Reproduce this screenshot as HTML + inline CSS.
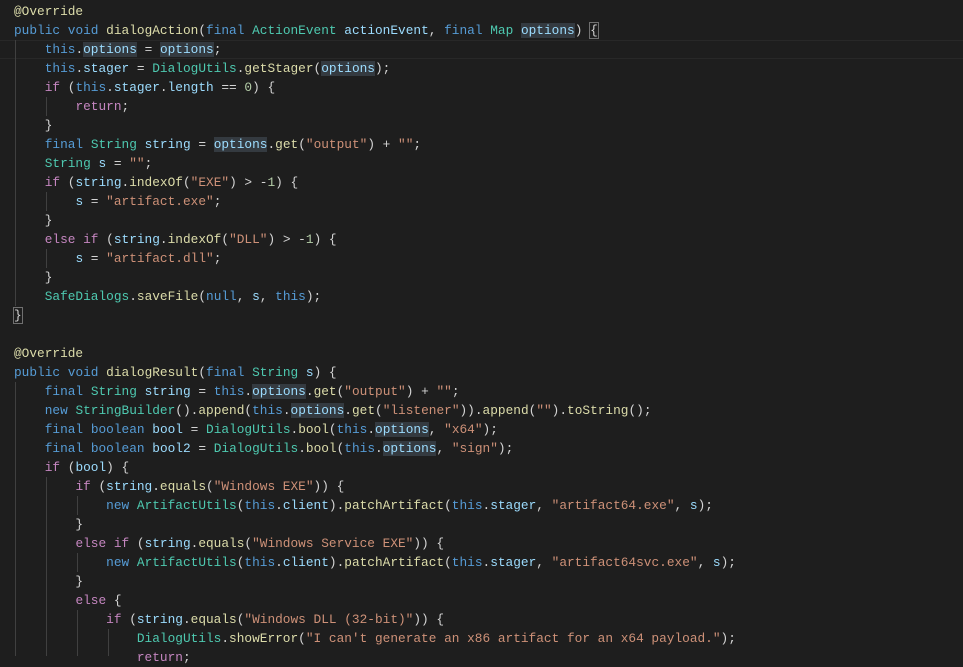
<!DOCTYPE html><html><head><style>
body{margin:0;background:#1e1e1e;width:963px;height:656px;overflow:hidden;position:relative}
pre{margin:0;position:absolute;left:14px;top:2px;font-family:"Liberation Mono",monospace;font-size:12.8px;line-height:19px;color:#d4d4d4}
.k{color:#569cd6}.c{color:#c586c0}.t{color:#4ec9b0}.f{color:#dcdcaa}.v{color:#9cdcfe}.s{color:#ce9178}.n{color:#b5cea8}
.h{background:#343a40}.b{outline:1px solid #707070}
.g{position:absolute;width:1px;background:#404040}
.cl{position:absolute;left:0;width:963px;top:40px;height:17px;border-top:1px solid #282828;border-bottom:1px solid #282828}
</style></head><body>
<div class="cl"></div>
<div class="g" style="left:15px;top:40px;height:266px"></div>
<div class="g" style="left:46px;top:97px;height:19px"></div>
<div class="g" style="left:46px;top:192px;height:19px"></div>
<div class="g" style="left:46px;top:249px;height:19px"></div>
<div class="g" style="left:15px;top:382px;height:274px"></div>
<div class="g" style="left:46px;top:477px;height:179px"></div>
<div class="g" style="left:77px;top:496px;height:19px"></div>
<div class="g" style="left:77px;top:553px;height:19px"></div>
<div class="g" style="left:77px;top:610px;height:46px"></div>
<div class="g" style="left:108px;top:629px;height:27px"></div>
<pre><span class="f">@Override</span>
<span class="k">public</span> <span class="k">void</span> <span class="f">dialogAction</span>(<span class="k">final</span> <span class="t">ActionEvent</span> <span class="v">actionEvent</span>, <span class="k">final</span> <span class="t">Map</span> <span class="v h">options</span>) <span class="b">{</span>
    <span class="k">this</span>.<span class="v h">options</span> = <span class="v h">options</span>;
    <span class="k">this</span>.<span class="v">stager</span> = <span class="t">DialogUtils</span>.<span class="f">getStager</span>(<span class="v h">options</span>);
    <span class="c">if</span> (<span class="k">this</span>.<span class="v">stager</span>.<span class="v">length</span> == <span class="n">0</span>) {
        <span class="c">return</span>;
    }
    <span class="k">final</span> <span class="t">String</span> <span class="v">string</span> = <span class="v h">options</span>.<span class="f">get</span>(<span class="s">"output"</span>) + <span class="s">""</span>;
    <span class="t">String</span> <span class="v">s</span> = <span class="s">""</span>;
    <span class="c">if</span> (<span class="v">string</span>.<span class="f">indexOf</span>(<span class="s">"EXE"</span>) &gt; -<span class="n">1</span>) {
        <span class="v">s</span> = <span class="s">"artifact.exe"</span>;
    }
    <span class="c">else</span> <span class="c">if</span> (<span class="v">string</span>.<span class="f">indexOf</span>(<span class="s">"DLL"</span>) &gt; -<span class="n">1</span>) {
        <span class="v">s</span> = <span class="s">"artifact.dll"</span>;
    }
    <span class="t">SafeDialogs</span>.<span class="f">saveFile</span>(<span class="k">null</span>, <span class="v">s</span>, <span class="k">this</span>);
<span class="b">}</span>

<span class="f">@Override</span>
<span class="k">public</span> <span class="k">void</span> <span class="f">dialogResult</span>(<span class="k">final</span> <span class="t">String</span> <span class="v">s</span>) {
    <span class="k">final</span> <span class="t">String</span> <span class="v">string</span> = <span class="k">this</span>.<span class="v h">options</span>.<span class="f">get</span>(<span class="s">"output"</span>) + <span class="s">""</span>;
    <span class="k">new</span> <span class="t">StringBuilder</span>().<span class="f">append</span>(<span class="k">this</span>.<span class="v h">options</span>.<span class="f">get</span>(<span class="s">"listener"</span>)).<span class="f">append</span>(<span class="s">""</span>).<span class="f">toString</span>();
    <span class="k">final</span> <span class="k">boolean</span> <span class="v">bool</span> = <span class="t">DialogUtils</span>.<span class="f">bool</span>(<span class="k">this</span>.<span class="v h">options</span>, <span class="s">"x64"</span>);
    <span class="k">final</span> <span class="k">boolean</span> <span class="v">bool2</span> = <span class="t">DialogUtils</span>.<span class="f">bool</span>(<span class="k">this</span>.<span class="v h">options</span>, <span class="s">"sign"</span>);
    <span class="c">if</span> (<span class="v">bool</span>) {
        <span class="c">if</span> (<span class="v">string</span>.<span class="f">equals</span>(<span class="s">"Windows EXE"</span>)) {
            <span class="k">new</span> <span class="t">ArtifactUtils</span>(<span class="k">this</span>.<span class="v">client</span>).<span class="f">patchArtifact</span>(<span class="k">this</span>.<span class="v">stager</span>, <span class="s">"artifact64.exe"</span>, <span class="v">s</span>);
        }
        <span class="c">else</span> <span class="c">if</span> (<span class="v">string</span>.<span class="f">equals</span>(<span class="s">"Windows Service EXE"</span>)) {
            <span class="k">new</span> <span class="t">ArtifactUtils</span>(<span class="k">this</span>.<span class="v">client</span>).<span class="f">patchArtifact</span>(<span class="k">this</span>.<span class="v">stager</span>, <span class="s">"artifact64svc.exe"</span>, <span class="v">s</span>);
        }
        <span class="c">else</span> {
            <span class="c">if</span> (<span class="v">string</span>.<span class="f">equals</span>(<span class="s">"Windows DLL (32-bit)"</span>)) {
                <span class="t">DialogUtils</span>.<span class="f">showError</span>(<span class="s">"I can't generate an x86 artifact for an x64 payload."</span>);
                <span class="c">return</span>;
</pre>
</body></html>
